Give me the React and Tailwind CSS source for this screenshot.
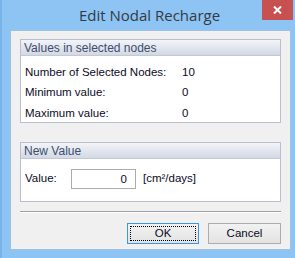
import { useState } from 'react';

const rows = [
  ['Number of Selected Nodes:', '10'],
  ['Minimum value:', '0'],
  ['Maximum value:', '0'],
];

function GroupBox({ title, className, children }) {
  return (
    <div className={`flex flex-col border border-[#b9bfcf] bg-white ${className}`}>
      <div className="h-[16px] flex items-center px-[3px] bg-gradient-to-b from-[#f3f4f8] to-[#d3d8e4] border-b border-[#c3c8d6] text-[#3d4e6e] text-[12px]">
        {title}
      </div>
      {children}
    </div>
  );
}

export default function App() {
  const [value, setValue] = useState('0');

  return (
    <div className="w-[295px] h-[258px] bg-[#8dc4f4] border-l-2 border-[#78b4ea] flex flex-col relative font-['Liberation_Sans',Arial,sans-serif] text-[11.5px] text-[#0b0b24]">
      <div className="h-[30px] flex items-center justify-center pl-[2px] font-['Open_Sans',sans-serif] text-[15px] text-[#343a44]">
        Edit Nodal Recharge
      </div>
      <button className="absolute top-0 left-[260px] w-[31px] h-[20px] bg-[#c75050] flex items-center justify-center">
        <svg width="9" height="8" viewBox="0 0 9 8">
          <path d="M1 0.5 L8 7.5 M8 0.5 L1 7.5" stroke="white" strokeWidth="2" />
        </svg>
      </button>
      <div className="ml-[8px] w-[281px] h-[220px] bg-[#f0f0f0] border border-[#9fc2e2] flex flex-col px-[9px] pt-[8px]">
        <GroupBox title="Values in selected nodes" className="h-[84px]">
          <div className="flex flex-col pl-[4px] pt-[6px]">
            {rows.map(([label, v]) => (
              <div key={label} className="h-[20.5px] flex items-center">
                <span className="w-[157px]">{label}</span>
                <span>{v}</span>
              </div>
            ))}
          </div>
        </GroupBox>
        <GroupBox title="New Value" className="h-[60px] mt-[19px]">
          <div className="flex items-center pl-[4px] pt-[10px]">
            <span className="w-[46px]">Value:</span>
            <input
              value={value}
              onChange={(e) => setValue(e.target.value)}
              className="w-[65px] h-[20px] border border-[#acacac] bg-white text-right pr-[8px] outline-none text-[11.5px]"
            />
            <span className="ml-[7px]">[cm²/days]</span>
          </div>
        </GroupBox>
        <div className="mt-[9px] h-[2px] border-t border-[#a0a0a0] border-b border-b-white" />
        <div className="flex justify-end gap-[9px] mt-[10px]">
          <button className="w-[72px] h-[21px] border border-[#3c96e8] bg-gradient-to-b from-[#f2f2f2] to-[#e3e3e3] p-[2px]">
            <div className="w-full h-full border border-dotted border-black flex items-center justify-center">OK</div>
          </button>
          <button className="w-[73px] h-[21px] border border-[#acacac] bg-gradient-to-b from-[#f2f2f2] to-[#e3e3e3] flex items-center justify-center">
            Cancel
          </button>
        </div>
      </div>
    </div>
  );
}
